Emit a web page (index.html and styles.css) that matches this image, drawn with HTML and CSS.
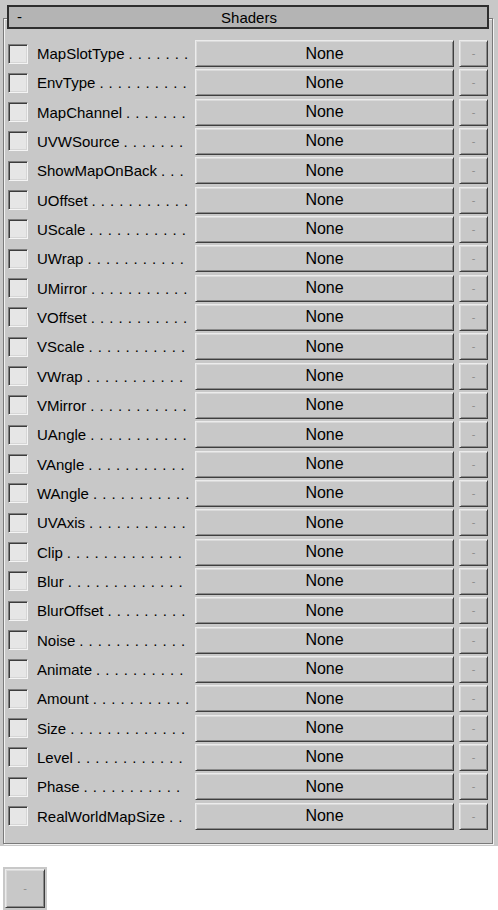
FILE: index.html
```html
<!DOCTYPE html>
<html>
<head>
<meta charset="utf-8">
<link rel="stylesheet" href="styles.css">
</head>
<body>
<div class="panel">
  <div class="group">
    <div class="header"><span class="toggle">-</span><span class="title">Shaders</span></div>
    <div class="rows" id="rows"></div>
  </div>
</div>
<div class="extra"><div class="btn small-btn single"><span class="dash">-</span></div></div>
<script src="script.js"></script>
</body>
</html>
```
FILE: script.js
```js
const names = ["MapSlotType","EnvType","MapChannel","UVWSource","ShowMapOnBack","UOffset","UScale","UWrap","UMirror","VOffset","VScale","VWrap","VMirror","UAngle","VAngle","WAngle","UVAxis","Clip","Blur","BlurOffset","Noise","Animate","Amount","Size","Level","Phase","RealWorldMapSize"];
const rows = document.getElementById('rows');
for (const n of names) {
  const r = document.createElement('div');
  r.className = 'row';
  r.innerHTML = '<span class="check"></span><span class="label"><span class="name">' + n + '</span><span class="leader"><span class="dots"></span></span></span><div class="btn main-btn">None</div><div class="btn small-btn"><span class="dash">-</span></div>';
  rows.appendChild(r);
}
function dotString(k) {
  const a = [];
  for (let i = 0; i < k; i++) a.push('.');
  return a.join(' ');
}
document.querySelectorAll('.leader').forEach(function (l) {
  const d = l.querySelector('.dots');
  const avail = l.clientWidth;
  let k = 1;
  while (k < 40) {
    d.textContent = dotString(k);
    if (d.getBoundingClientRect().width > avail) break;
    k++;
  }
  d.textContent = dotString(k - 1);
});
```
FILE: styles.css
```css
html, body { margin: 0; padding: 0; background: #ffffff; }
body { font-family: "Liberation Sans", Arial, sans-serif; color: #000; width: 498px; }
.panel { background: #c8c8c8; height: 846px; padding-top: 18px; box-sizing: border-box; }
.group {
  margin-left: 3px; width: 490px; height: 826px; box-sizing: border-box;
  border: 1px solid #7a7a7a;
  box-shadow: 1px 1px 0 #f2f2f2, inset 1px 1px 0 #f2f2f2;
}
.header {
  margin: -14px 3px 0 3px; height: 24px; box-sizing: border-box;
  border: 2px solid #2e2e2e; background: #b4b4b4;
  display: flex; align-items: center; font-size: 15px; position: relative;
}
.toggle { position: absolute; left: 8px; top: 1px; font-size: 15px; }
.title { flex: 1; text-align: center; padding-left: 2px; }
.rows {
  display: grid; grid-auto-rows: 27px; row-gap: 2.333px;
  margin-top: 11px; padding: 0 4px;
}
.row { display: flex; align-items: center; }
.check {
  width: 20px; height: 20px; box-sizing: border-box; flex: none;
  border: 1px solid; border-color: #7c7c7c #f4f4f4 #f4f4f4 #7c7c7c;
  box-shadow: inset 1px 1px 0 #3c3c3c, inset -1px -1px 0 #d6d6d6;
  background: #e6e6e6; margin-right: 9px;
}
.label {
  width: 149px; margin-right: 9px; display: flex; align-items: center;
  font-size: 15px; white-space: nowrap; flex: none;
}
.name { flex: none; }
.leader {
  flex: 1; min-width: 0; display: flex; justify-content: flex-start;
  padding-left: 4px; padding-right: 0;
  font-size: 15px; letter-spacing: 0.45px; white-space: nowrap;
}
.dots { flex: none; }
.btn {
  box-sizing: border-box; height: 27px; background: #c8c8c8;
  border: 1px solid; border-color: #ececec #3e3e3e #3e3e3e #ececec;
  box-shadow: inset 1px 1px 0 #dadada, inset -1px -1px 0 #8a8a8a;
  display: flex; align-items: center; justify-content: center;
}
.main-btn { width: 259px; flex: none; font-size: 16px; margin-right: 5px; }
.small-btn { width: 29px; flex: none; }
.dash { color: #8c8c8c; font-size: 11px; line-height: 1; }
.extra { margin: 21px 0 0 3px; width: 44px; height: 43px; background: #c8c8c8; padding: 2px 2px 0 2px; box-sizing: border-box; }
.single { width: 40px; height: 39px; }
```
